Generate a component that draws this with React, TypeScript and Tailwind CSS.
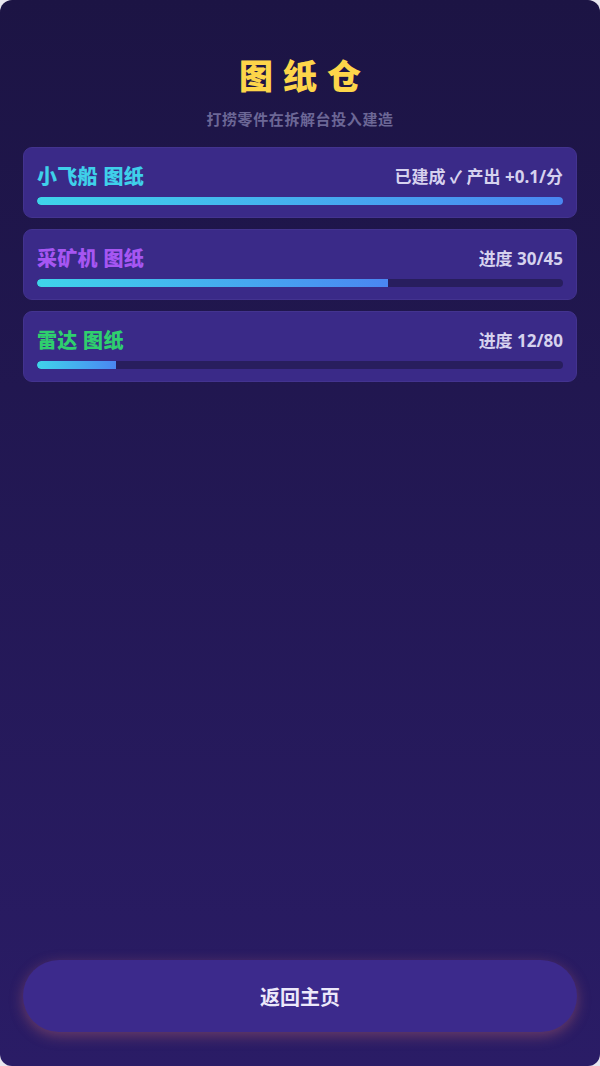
import React from 'react';

interface Blueprint {
  id: string;
  name: string;
  color: string;
  status: string;
  percent: number;
}

const blueprints: Blueprint[] = [
  { id: 'ship', name: '小飞船 图纸', color: 'text-[#3fd0ea]', status: '已建成 ✓ 产出 +0.1/分', percent: 100 },
  { id: 'miner', name: '采矿机 图纸', color: 'text-[#a656f2]', status: '进度 30/45', percent: (30 / 45) * 100 },
  { id: 'radar', name: '雷达 图纸', color: 'text-[#2fcf6e]', status: '进度 12/80', percent: (12 / 80) * 100 },
];

const BlueprintCard: React.FC<{ item: Blueprint }> = ({ item }) => (
  <div className="rounded-[9px] border border-[#43338f] bg-[#3a2a88] px-[13px] pt-[15px] pb-[12px]">
    <div className="flex items-center justify-between">
      <span className={`text-[20px] font-extrabold leading-[28px] tracking-[0.3px] ${item.color}`}>{item.name}</span>
      <span className="text-[17px] font-bold leading-[28px] text-[#d6d2ee]">{item.status}</span>
    </div>
    <div className="mt-[6px] h-[8px] w-full overflow-hidden rounded-full bg-[#281e5e]">
      <div
        className="h-full rounded-l-full bg-gradient-to-r from-[#3fd4ea] to-[#4a86f2]"
        style={{ width: `${item.percent}%` }}
      />
    </div>
  </div>
);

export default function App() {
  return (
    <div className="bg-[#e9e7ef]">
      <div
        className="flex h-[1066px] flex-col overflow-hidden rounded-[12px] bg-gradient-to-b from-[#1c1444] to-[#2a1c66] px-[23px] pt-[54px] pb-[34px]"
        style={{ fontFamily: '"Noto Sans", "Noto Sans CJK SC", sans-serif' }}
      >
        <h1 className="pl-[10px] text-center text-[34px] font-black leading-[44px] tracking-[10px] text-[#fdd54a]">
          图纸仓
        </h1>
        <p className="mt-[10px] text-center text-[15px] font-bold leading-[22px] tracking-[0.6px] text-[#6c6796]">
          打捞零件在拆解台投入建造
        </p>

        <div className="mt-[17px] flex flex-col gap-[11px]">
          {blueprints.map((b) => (
            <BlueprintCard key={b.id} item={b} />
          ))}
        </div>

        <button className="mt-auto h-[72px] w-full rounded-full bg-[#3c2a8c] pt-[3px] text-[20px] font-bold text-[#ece8fa] shadow-[0_4px_14px_rgba(226,120,110,0.35)]">
          返回主页
        </button>
      </div>
    </div>
  );
}
